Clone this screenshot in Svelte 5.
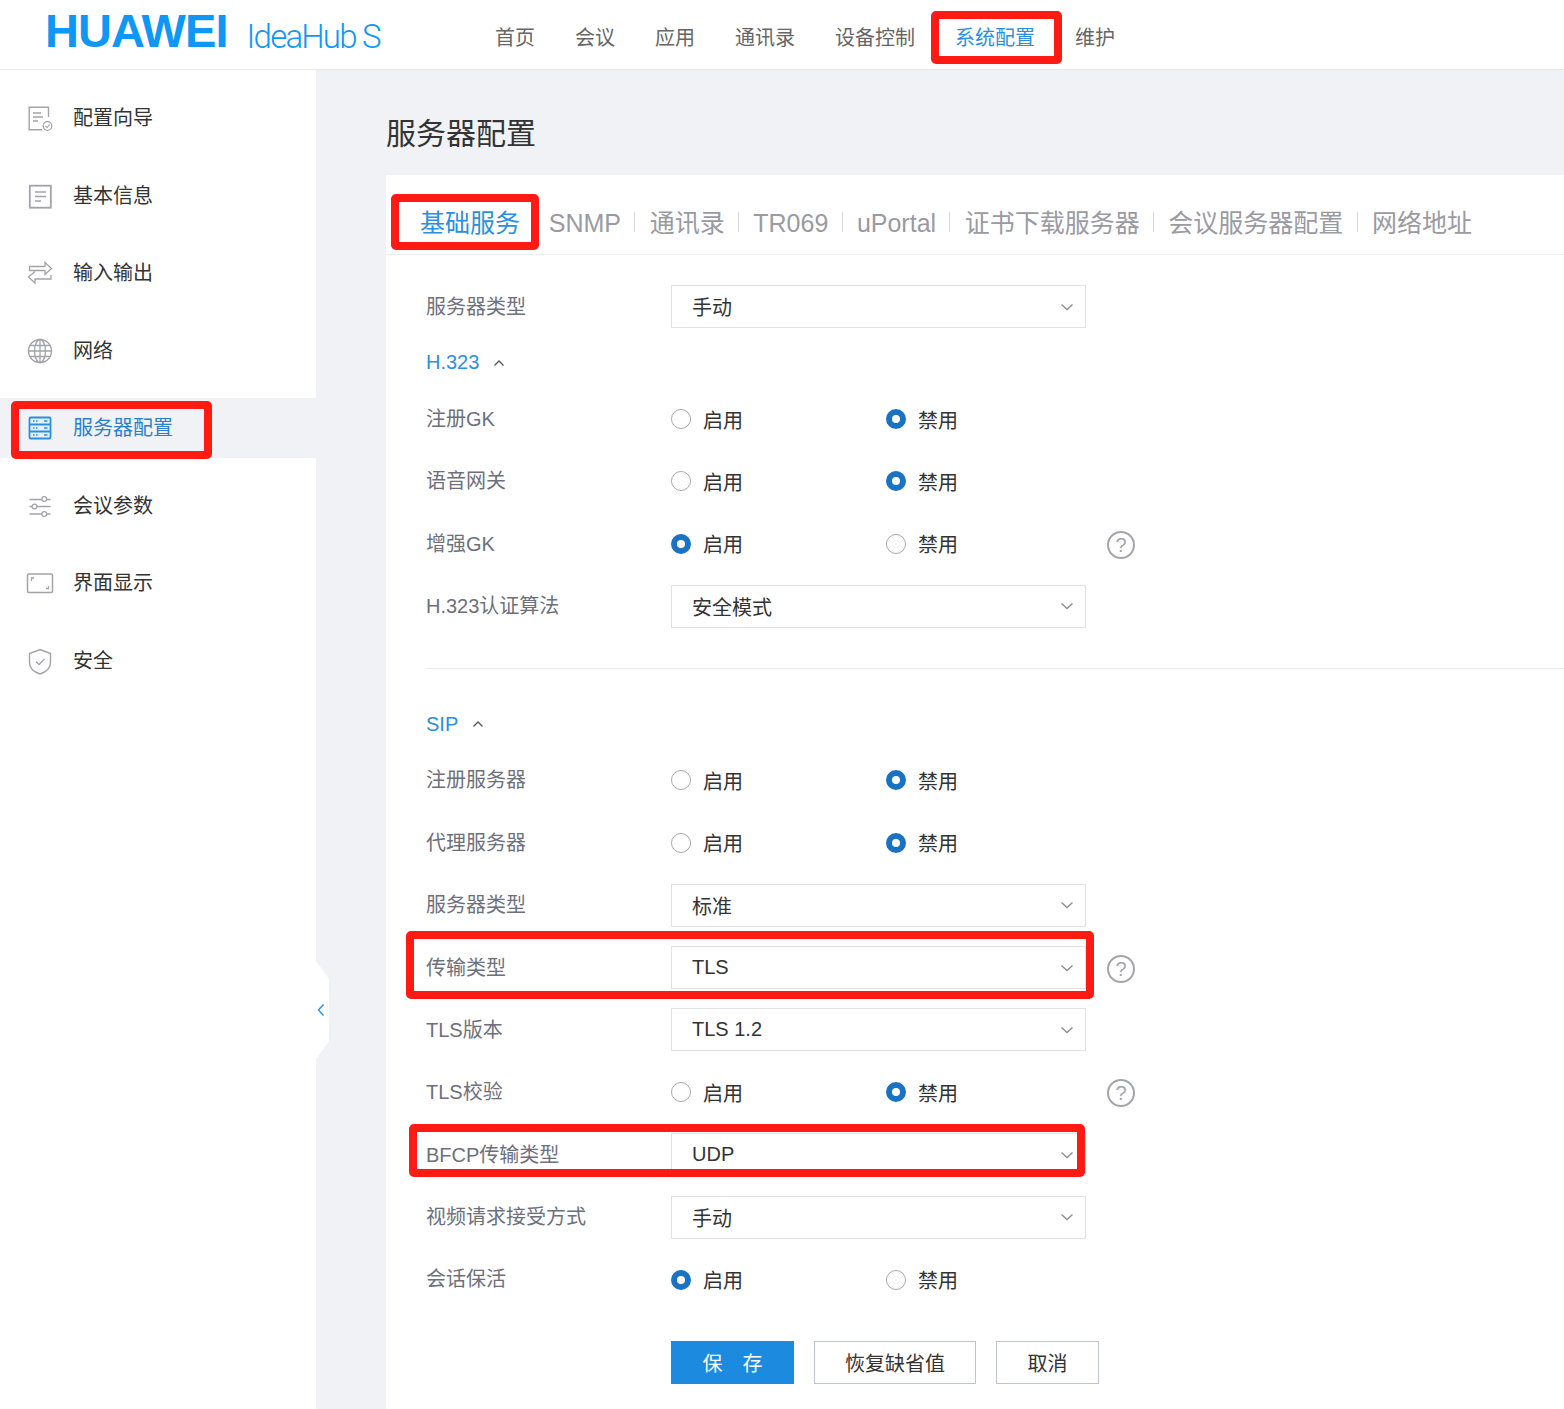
<script>
    const topNav = ['首页', '会议', '应用', '通讯录', '设备控制', '系统配置', '维护'];
    const sideNav = [
        { key: 'wizard', label: '配置向导' },
        { key: 'info', label: '基本信息' },
        { key: 'io', label: '输入输出' },
        { key: 'net', label: '网络' },
        { key: 'server', label: '服务器配置', active: true },
        { key: 'params', label: '会议参数' },
        { key: 'display', label: '界面显示' },
        { key: 'security', label: '安全' }
    ];
    const tabs = ['基础服务', 'SNMP', '通讯录', 'TR069', 'uPortal', '证书下载服务器', '会议服务器配置', '网络地址'];

    const h323 = [
        { label: '注册GK', on: false },
        { label: '语音网关', on: false },
        { label: '增强GK', on: true, help: true },
        { label: 'H.323认证算法', value: '安全模式' }
    ];
    const sip = [
        { label: '注册服务器', on: false },
        { label: '代理服务器', on: false },
        { label: '服务器类型', value: '标准' },
        { label: '传输类型', value: 'TLS', help: true },
        { label: 'TLS版本', value: 'TLS 1.2' },
        { label: 'TLS校验', on: false, help: true },
        { label: 'BFCP传输类型', value: 'UDP' },
        { label: '视频请求接受方式', value: '手动' },
        { label: '会话保活', on: true }
    ];
</script>

{#snippet row(item)}
    <div class="row">
        <span class="label">{item.label}</span>
        {#if item.value}
            <div class="select">
                <span>{item.value}</span>
                <svg width="14" height="8" viewBox="0 0 14 8"><path d="M1.5 1.5 7 6.5l5.5-5" fill="none" stroke="#8b8b95" stroke-width="1.3"/></svg>
            </div>
        {:else}
            <div class="radios">
                <span class="radio"><i class:checked={item.on}></i>启用</span>
                <span class="radio"><i class:checked={!item.on}></i>禁用</span>
            </div>
        {/if}
        {#if item.help}
            <span class="help">?</span>
        {/if}
    </div>
{/snippet}

{#snippet group(title)}
    <div class="group-title">
        <span>{title}</span>
        <svg width="12" height="8" viewBox="0 0 12 8"><path d="M1.5 6.5 6 2l4.5 4.5" fill="none" stroke="#555" stroke-width="1.3"/></svg>
    </div>
{/snippet}

<div class="page">
    <header>
        <div class="logo">
            <span class="brand">HUAWEI</span>
            <span class="product">IdeaHub S</span>
        </div>
        <nav>
            {#each topNav as item}
                <span class:current={item === '系统配置'}>{item}</span>
            {/each}
        </nav>
    </header>

    <div class="body">
        <aside>
            {#each sideNav as item}
                <div class="side-item" class:active={item.active}>
                    <svg class="icon" width="28" height="28" viewBox="0 0 28 28" fill="none" stroke={item.active ? '#2b8fe0' : '#a2a2ab'} stroke-width="1.4">
                        {#if item.key === 'wizard'}
                            <path d="M22.5 13V3.200H3.200v22.500h13"/>
                            <path d="M7 9h8M7 13h10M7 17h5" stroke-width="1.3"/>
                            <circle cx="21.500" cy="22" r="4.300" stroke-width="1.200"/>
                            <path d="m19.500 22 1.500 1.500 2.600-2.800" stroke-width="1.100"/>
                        {:else if item.key === 'info'}
                            <rect x="3.800" y="3.700" width="21" height="22" stroke-width="1.800"/>
                            <path d="M9 10h11M9 14.500h11M9 19h6" stroke-width="1.600"/>
                        {:else if item.key === 'io'}
                            <path d="M3.500 11.500V7.500h15.500V3.500l6.500 6-6.500 6v-4z" stroke-width="1.300"/>
                            <path d="M25 16v4H9v4l-6.500-6L9 12.500" stroke-width="1.300"/>
                        {:else if item.key === 'net'}
                            <circle cx="14" cy="14" r="11.500" stroke-width="1.400"/>
                            <ellipse cx="14" cy="14" rx="5.500" ry="11.500" stroke-width="1.300"/>
                            <path d="M14 2.500v23M2.500 14h23M4.200 8.500h19.600M4.200 19.500h19.600" stroke-width="1.300"/>
                        {:else if item.key === 'server'}
                            <rect x="3.500" y="3.500" width="21" height="21" rx="1" stroke-width="1.800" fill="#e4f1fb"/>
                            <path d="M3.500 10.500h21M3.500 17.500h21" stroke-width="1.800"/>
                            <path d="M7 7h1.500M10 7h1.500M7 14h1.500M10 14h1.500M7 21h1.500M10 21h1.500M18 7h3.500M18 14h3.500M18 21h3.500" stroke-width="1.400"/>
                        {:else if item.key === 'params'}
                            <path d="M3.500 7.500h12.500M20.500 7.500h4M3.500 14.500h2.500M11 14.500h13.500M3.500 22h12.500M20.500 22h4" stroke-width="1.300"/>
                            <circle cx="18.300" cy="7" r="2.400" stroke-width="1.200"/>
                            <circle cx="8.500" cy="14.500" r="2.400" stroke-width="1.200"/>
                            <circle cx="18.300" cy="22" r="2.400" stroke-width="1.200"/>
                        {:else if item.key === 'display'}
                            <rect x="1.500" y="5" width="25" height="18.500" rx="1.500" stroke-width="1.500"/>
                            <path d="M5.500 12V9H8M22.500 17v2.500H20" stroke-width="1.300"/>
                        {:else}
                            <path d="M14 2.500 24.500 6.500v9c0 5.500-4.500 9.500-10.500 11.500C8 25 3.500 21 3.500 15.500v-9z" stroke-width="1.400"/>
                            <path d="m10 14.500 3 3 5.500-5.500" stroke-width="1.300"/>
                        {/if}
                    </svg>
                    <span>{item.label}</span>
                </div>
            {/each}
            <div class="collapse">
                <svg width="8" height="14" viewBox="0 0 8 14"><path d="M6.500 1.500 1.500 7l5 5.500" fill="none" stroke="#2b8fe0" stroke-width="1.4"/></svg>
            </div>
        </aside>

        <main>
            <h1>服务器配置</h1>
            <section class="card">
                <div class="tabs">
                    {#each tabs as tab, i}
                        <span class="tab" class:current={i === 0}>{tab}</span>
                    {/each}
                </div>

                <div class="form">
                    {@render row({ label: '服务器类型', value: '手动' })}

                    {@render group('H.323')}
                    {#each h323 as item}
                        {@render row(item)}
                    {/each}

                    <hr />

                    {@render group('SIP')}
                    {#each sip as item}
                        {@render row(item)}
                    {/each}

                    <div class="actions">
                        <button class="primary">保<b></b>存</button>
                        <button>恢复缺省值</button>
                        <button>取消</button>
                    </div>
                </div>
            </section>
        </main>
    </div>

    <!-- red annotation frames drawn over the screenshot -->
    <div class="mark mark-nav"></div>
    <div class="mark mark-side"></div>
    <div class="mark mark-tab"></div>
    <div class="mark mark-transport"></div>
    <div class="mark mark-bfcp"></div>
</div>

<style>
    :global(body) {
        margin: 0;
        background: #fff;
    }

    .page {
        position: relative;
        width: 1564px;
        height: 1409px;
        overflow: hidden;
        font-family: "Liberation Sans", "Noto Sans CJK SC", sans-serif;
        font-size: 20px;
        color: #333;
    }

    /* HEADER */
    header {
        height: 69px;
        border-bottom: 1px solid #e8e8ea;
        display: flex;
        align-items: center;
        box-sizing: content-box;
    }

    .logo {
        width: 450px;
        margin-left: 45px;
        display: flex;
        align-items: baseline;
        color: #0f97f5;
        height: 69px;
        flex-shrink: 0;
    }

    .brand {
        font-size: 47px;
        font-weight: 700;
        letter-spacing: -0.9px;
        line-height: 62px;
    }

    .product {
        font-family: Roboto, sans-serif;
        font-weight: 300;
        font-size: 33px;
        letter-spacing: -1.8px;
        margin-left: 19px;
        position: relative;
        top: 1px;
    }

    nav {
        display: flex;
        gap: 40px;
        color: #666;
        padding-top: 4px;
    }

    nav .current {
        color: #2b8fe0;
    }

    .body {
        display: flex;
        height: 1339px;
    }

    /* SIDEBAR */
    aside {
        position: relative;
        width: 316px;
        flex-shrink: 0;
        padding-top: 18px;
        box-sizing: border-box;
        display: flex;
        flex-direction: column;
        gap: 17.5px;
    }

    .side-item {
        height: 60px;
        display: flex;
        align-items: center;
        padding-left: 26px;
        gap: 19px;
        color: #333;
    }

    .side-item span {
        position: relative;
        top: -1.5px;
    }

    .side-item.active {
        background: #f0f2f6;
        color: #2b7fd0;
    }

    .collapse {
        position: absolute;
        left: 100%;
        top: 891px;
        width: 13px;
        height: 98px;
        background: #fff;
        clip-path: polygon(0 0, 100% 18%, 100% 82%, 0 100%);
        display: flex;
        align-items: center;
    }

    .collapse svg {
        margin-left: 1px;
    }

    /* MAIN */
    main {
        flex: 1;
        background: #f0f2f5;
        padding-left: 70px;
        min-width: 0;
    }

    h1 {
        margin: 0;
        height: 105px;
        line-height: 127px;
        font-size: 30px;
        font-weight: 400;
        color: #333;
    }

    .card {
        background: #fff;
        height: 1300px;
    }

    .tabs {
        height: 80px;
        border-bottom: 1px solid #eeeef0;
        display: flex;
        align-items: center;
        padding: 18px 0 0 34px;
        box-sizing: border-box;
        font-size: 25px;
        color: #9a9aa2;
    }

    .tab {
        padding: 0 14.3px;
        position: relative;
        line-height: 29px;
    }

    .tab:first-child {
        padding-left: 0;
        padding-right: 14.5px;
    }

    .tab:not(:first-child):not(:last-child)::after {
        content: "";
        position: absolute;
        right: 0;
        top: 3px;
        height: 20px;
        border-right: 1px solid #d5d5da;
    }

    .tab.current {
        color: #2b8fe0;
    }

    .form {
        padding: 20.6px 0 0 40px;
    }

    .row {
        height: 62.4px;
        display: flex;
        align-items: center;
    }

    .label {
        width: 245px;
        flex-shrink: 0;
        color: #6d707c;
        position: relative;
        top: -1.6px;
    }

    .select {
        width: 415px;
        height: 43px;
        box-sizing: border-box;
        border: 1px solid #e2e2e6;
        display: flex;
        align-items: center;
        justify-content: space-between;
        padding: 0 11px 0 20px;
        flex-shrink: 0;
    }

    .radios {
        width: 415px;
        display: flex;
        flex-shrink: 0;
    }

    .radio {
        width: 215px;
        flex-shrink: 0;
        display: flex;
        align-items: center;
        gap: 12px;
    }

    .radio i {
        width: 20px;
        height: 20px;
        box-sizing: border-box;
        border: 1px solid #aaa;
        border-radius: 50%;
        flex-shrink: 0;
    }

    .radio i.checked {
        border: 6px solid #1a72c4;
    }

    .help {
        margin-left: 21px;
        width: 28px;
        height: 28px;
        box-sizing: border-box;
        border: 2px solid #a4a4ac;
        border-radius: 50%;
        color: #a4a4ac;
        font-size: 20px;
        line-height: 25px;
        text-align: center;
        position: relative;
        top: 1px;
    }

    .group-title {
        height: 49.85px;
        display: flex;
        align-items: center;
        gap: 14px;
        color: #2b8fe0;
    }

    hr {
        border: none;
        border-top: 1px solid #e9e9ec;
        margin: 31px 0 30px;
    }

    .actions {
        display: flex;
        gap: 20px;
        margin: 30px 0 0 245px;
    }

    button {
        height: 43px;
        width: 103px;
        box-sizing: border-box;
        border: 1px solid #bfc3d2;
        background: #fff;
        font: inherit;
        color: #333;
        padding: 0;
    }

    button:nth-child(2) {
        width: 162px;
    }

    button.primary {
        width: 123px;
        background: #1c8ade;
        border-color: #1c8ade;
        color: #fff;
    }

    button b {
        display: inline-block;
        width: 20px;
    }

    /* ANNOTATIONS */
    .mark {
        position: absolute;
        box-sizing: border-box;
        border: 8px solid #ff1a14;
        border-radius: 5px;
        pointer-events: none;
    }

    .mark-nav { left: 931px; top: 11px; width: 131px; height: 53px; }
    .mark-side { left: 11px; top: 401px; width: 201px; height: 58px; }
    .mark-tab { left: 391px; top: 194px; width: 148px; height: 56px; }
    .mark-transport { left: 406px; top: 931px; width: 688px; height: 68px; }
    .mark-bfcp { left: 409px; top: 1124px; width: 676px; height: 53px; }
</style>
